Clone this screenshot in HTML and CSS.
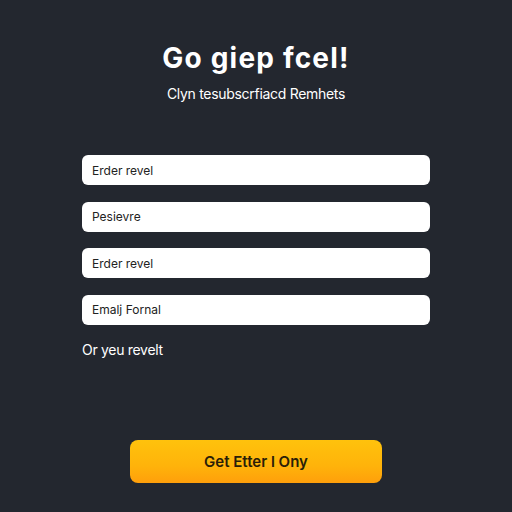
FILE: index.html
```html
<!DOCTYPE html>
<html>
<head>
<meta charset="utf-8">
<link rel="stylesheet" href="styles.css">
</head>
<body>
<div class="page">
  <h1 class="title">Go giep fcel!</h1>
  <p class="subtitle">Clyn tesubscrfiacd Remhets</p>
  <form class="form">
    <div class="field">Erder revel</div>
    <div class="field">Pesievre</div>
    <div class="field">Erder revel</div>
    <div class="field">Emalj Fornal</div>
  </form>
  <p class="alt">Or yeu revelt</p>
  <div class="cta"><button class="btn" type="button">Get Etter l Ony</button></div>
</div>
</body>
</html>
```
FILE: styles.css
```css
html, body {
  margin: 0;
  padding: 0;
  background: #23272f;
}
body {
  width: 512px;
  height: 512px;
  overflow: hidden;
  font-family: Inter, "Liberation Sans", sans-serif;
}
.page {
  display: flex;
  flex-direction: column;
  padding: 40px 82px 0 82px;
}
.title {
  margin: 0;
  text-align: center;
  color: #ffffff;
  font-size: 28px;
  font-weight: 700;
  line-height: 36px;
  letter-spacing: 1.2px;
}
.subtitle {
  margin: 8px 0 0 0;
  text-align: center;
  color: #ffffff;
  font-size: 14px;
  line-height: 20px;
  letter-spacing: -0.3px;
}
.form {
  margin-top: 51px;
  display: flex;
  flex-direction: column;
  gap: 16.5px;
}
.field {
  height: 30px;
  background: #ffffff;
  border-radius: 6px;
  padding-left: 10px;
  display: flex;
  align-items: center;
  color: #222222;
  font-size: 12px;
  letter-spacing: 0;
}
.alt {
  margin: 15px 0 0 0;
  color: #ffffff;
  font-size: 14px;
  line-height: 20px;
  letter-spacing: -0.3px;
}
.cta {
  display: flex;
  justify-content: center;
  margin-top: 80px;
}
.btn {
  width: 252px;
  height: 43px;
  border: none;
  border-radius: 8px;
  background: linear-gradient(180deg, #ffc20c 0%, #ffb30a 60%, #ff9f0b 100%);
  color: #2a1e08;
  font-family: Inter, "Liberation Sans", sans-serif;
  font-size: 15px;
  font-weight: 600;
}
```
